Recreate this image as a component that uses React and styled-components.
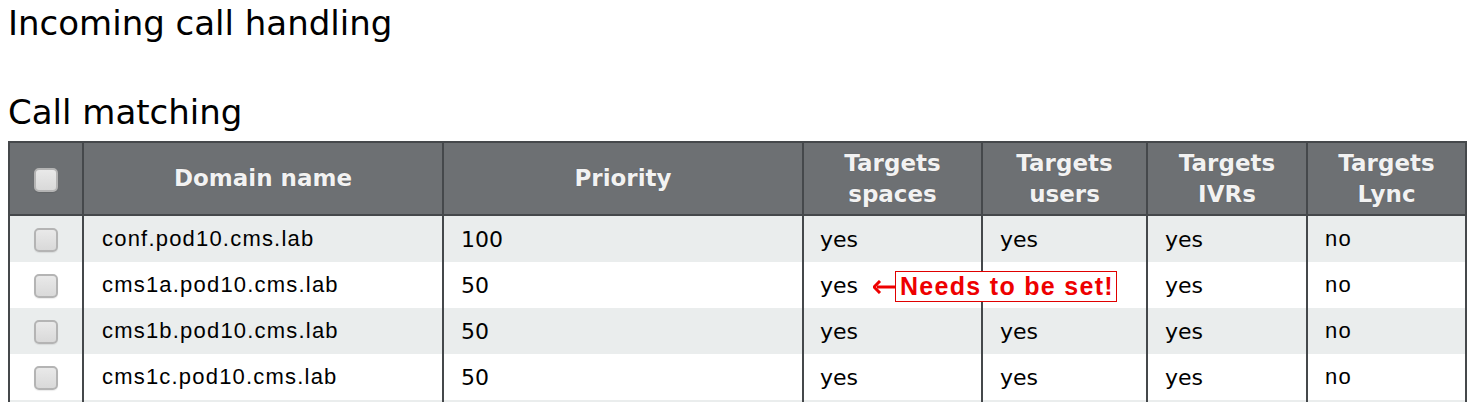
import React from 'react'
import styled, { createGlobalStyle } from 'styled-components'

const GlobalStyle = createGlobalStyle`
   html, body {
      overflow: hidden;
   }
   body {
      margin: 0;
      background: #ffffff;
      font-family: 'DejaVu Sans', sans-serif;
      color: #000;
   }
`

const rows = [
   { domain: 'conf.pod10.cms.lab', priority: 100, spaces: 'yes', users: 'yes', ivrs: 'yes', lync: 'no' },
   { domain: 'cms1a.pod10.cms.lab', priority: 50, spaces: 'yes', users: '', ivrs: 'yes', lync: 'no', note: true },
   { domain: 'cms1b.pod10.cms.lab', priority: 50, spaces: 'yes', users: 'yes', ivrs: 'yes', lync: 'no' },
   { domain: 'cms1c.pod10.cms.lab', priority: 50, spaces: 'yes', users: 'yes', ivrs: 'yes', lync: 'no' },
   { domain: '', priority: '', spaces: '', users: '', ivrs: '', lync: '', blank: true },
]

const Page = styled.div`
   width: 1459px;
   padding: 5px 0 0 8px;
`

const Title = styled.h1`
   margin: 0;
   font-family: 'DejaVu Sans', sans-serif;
   font-weight: normal;
   font-size: 34px;
   line-height: 36px;
`

const SubTitle = styled.h2`
   margin: 53px 0 11px;
   font-family: 'DejaVu Sans', sans-serif;
   font-weight: normal;
   font-size: 34px;
   line-height: 36px;
`

const Table = styled.table`
   width: 1459px;
   table-layout: fixed;
   border-collapse: collapse;
   border: 2px solid #45484b;
`

const Th = styled.th`
   background: #6d7073;
   color: #f2f2f2;
   font-family: 'DejaVu Sans', sans-serif;
   font-weight: bold;
   font-size: 23px;
   line-height: 31px;
   height: 71px;
   padding: 0 4px;
   border: 2px solid #45484b;
   text-align: center;
   vertical-align: middle;
   text-shadow: 0 0 1px rgba(0, 0, 0, 0.25);
`

const Row = styled.tr`
   background: ${(props) => (props.odd ? '#eaeded' : '#ffffff')};
`

const Td = styled.td`
   height: 46px;
   padding: 0 0 0 ${(props) => props.pad || 17}px;
   border-left: 2px solid #45484b;
   border-right: 2px solid #45484b;
   font-family: ${(props) =>
      props.arial ? "'Liberation Sans', Arial, sans-serif" : "'DejaVu Sans', sans-serif"};
   font-size: 22px;
   letter-spacing: ${(props) => (props.arial ? 1.2 : 0)}px;
   vertical-align: middle;
   white-space: nowrap;
   position: relative;
`

const BoxCell = styled(Td)`
   padding: 0;
   text-align: center;
`

const Check = styled.span`
   display: inline-block;
   vertical-align: middle;
   width: 20px;
   height: 20px;
   border: 2px solid #b4b4b4;
   border-radius: 5px;
   background: linear-gradient(#e9e9e9, #d9d9d9);
   box-shadow: 0 1px 1px rgba(0, 0, 0, 0.08);
`

const Note = styled.div`
   position: absolute;
   left: 69px;
   top: 9px;
   display: flex;
   align-items: center;
   z-index: 2;
`

const NoteBox = styled.span`
   border: 1px solid #e00000;
   background: #fff;
   color: #ee0000;
   font-family: 'Liberation Sans', Arial, sans-serif;
   font-weight: bold;
   font-size: 25px;
   letter-spacing: 1.3px;
   line-height: 29px;
   padding: 0 2px 0 4px;
`

const Arrow = () => (
   <svg width="22" height="14" viewBox="0 0 22 14">
      <path d="M22 7H4" stroke="#ee0000" strokeWidth="3" />
      <path d="M7 1L1 7l6 6" fill="none" stroke="#ee0000" strokeWidth="3" />
   </svg>
)

export default function App() {
   return (
      <>
         <GlobalStyle />
         <Page>
            <Title>Incoming call handling</Title>
            <SubTitle>Call matching</SubTitle>
            <Table>
               <colgroup>
                  <col style={{ width: 74 }} />
                  <col style={{ width: 360 }} />
                  <col style={{ width: 360 }} />
                  <col style={{ width: 179 }} />
                  <col style={{ width: 165 }} />
                  <col style={{ width: 160 }} />
                  <col style={{ width: 159 }} />
               </colgroup>
               <thead>
                  <tr>
                     <Th>
                        <Check />
                     </Th>
                     <Th>Domain name</Th>
                     <Th>Priority</Th>
                     <Th>
                        Targets
                        <br />
                        spaces
                     </Th>
                     <Th>
                        Targets
                        <br />
                        users
                     </Th>
                     <Th>
                        Targets
                        <br />
                        IVRs
                     </Th>
                     <Th>
                        Targets
                        <br />
                        Lync
                     </Th>
                  </tr>
               </thead>
               <tbody>
                  {rows.map((r, i) => (
                     <Row key={i} odd={i % 2 === 0}>
                        <BoxCell>{!r.blank && <Check />}</BoxCell>
                        <Td arial pad={18}>{r.domain}</Td>
                        <Td>{r.priority}</Td>
                        <Td pad={16}>
                           {r.spaces}
                           {r.note && (
                              <Note>
                                 <Arrow />
                                 <NoteBox>Needs to be set!</NoteBox>
                              </Note>
                           )}
                        </Td>
                        <Td>{r.users}</Td>
                        <Td>{r.ivrs}</Td>
                        <Td arial>{r.lync}</Td>
                     </Row>
                  ))}
               </tbody>
            </Table>
         </Page>
      </>
   )
}
